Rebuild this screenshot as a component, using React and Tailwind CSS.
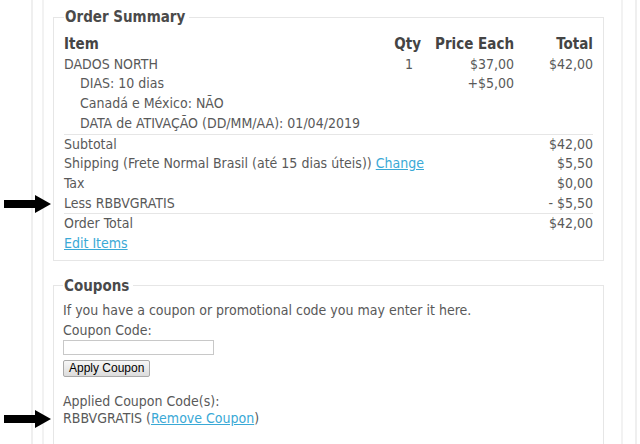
import React from "react";

const FONT = { fontFamily: '"DejaVu Sans Condensed", "DejaVu Sans", sans-serif' };

const Arrow = () => (
  <svg width="47" height="18" viewBox="0 0 47 18" className="block">
    <path d="M0 5 H31 V0 L47 9 L31 18 V13 H0 Z" fill="#000" />
  </svg>
);

const items = [
  { label: "DADOS NORTH", qty: "1", price: "$37,00", total: "$42,00" },
  { label: "DIAS: 10 dias", sub: true, price: "+$5,00" },
  { label: "Canadá e México: NÃO", sub: true },
  { label: "DATA de ATIVAÇÃO (DD/MM/AA): 01/04/2019", sub: true },
];

const Link = ({ children }) => (
  <a href="#" className="text-[#3aa9d6] underline">
    {children}
  </a>
);

const App = () => {
  return (
    <div className="relative h-[444px] w-[640px] overflow-hidden bg-white text-[14px] text-[#595959]" style={FONT}>
      <div className="ml-[31px] h-full w-[606px] border-x-2 border-[#efefef]">
        <div className="ml-[9px] mr-[12px] h-full border-x-2 border-[#f2f2f2] pt-[8px]">
          <fieldset className="ml-[9px] mr-[17px] border border-[#e6e6e6] px-[10px] pb-[6px]">
            <legend className="px-[1px] pr-1 text-[15px] font-bold leading-[18px] text-[#4a4a4a]">Order Summary</legend>
            <table className="mt-[9px] w-full border-collapse leading-[19.7px]">
              <thead>
                <tr className="text-[15px] font-bold text-[#444]">
                  <th className="text-left">Item</th>
                  <th className="w-[60px] text-right">Qty</th>
                  <th className="w-[93px] text-right">Price Each</th>
                  <th className="w-[79px] text-right">Total</th>
                </tr>
              </thead>
              <tbody>
                {items.map((it, i) => (
                  <tr key={i} className={i === items.length - 1 ? "border-b border-[#e6e6e6]" : ""}>
                    <td className={it.sub ? "pl-[16px]" : ""}>{it.label}</td>
                    <td className="pr-[8px] text-right">{it.qty}</td>
                    <td className="text-right">{it.price}</td>
                    <td className="text-right">{it.total}</td>
                  </tr>
                ))}
                <tr>
                  <td colSpan={3}>Subtotal</td>
                  <td className="text-right">$42,00</td>
                </tr>
                <tr>
                  <td colSpan={3}>
                    Shipping (Frete Normal Brasil (até 15 dias úteis)) <Link>Change</Link>
                  </td>
                  <td className="text-right">$5,50</td>
                </tr>
                <tr>
                  <td colSpan={3}>Tax</td>
                  <td className="text-right">$0,00</td>
                </tr>
                <tr className="border-b border-[#e6e6e6]">
                  <td colSpan={3}>Less RBBVGRATIS</td>
                  <td className="text-right">- $5,50</td>
                </tr>
                <tr>
                  <td colSpan={3}>Order Total</td>
                  <td className="text-right">$42,00</td>
                </tr>
                <tr>
                  <td colSpan={4}>
                    <Link>Edit Items</Link>
                  </td>
                </tr>
              </tbody>
            </table>
          </fieldset>

          <fieldset className="ml-[9px] mr-[17px] mt-[16px] border border-[#e6e6e6] px-[9px] pb-[40px]">
            <legend className="px-[1px] pr-1 text-[15px] font-bold leading-[18px] text-[#4a4a4a]">Coupons</legend>
            <div className="leading-[20px]">
              <p className="mt-[5px]">If you have a coupon or promotional code you may enter it here.</p>
              <p>Coupon Code:</p>
              <input className="block h-[15px] w-[151px] border border-[#c8c8c8] bg-white" />
              <button
                className="mt-[5px] block h-[17px] rounded-[2px] border border-[#a9a9a9] bg-gradient-to-b from-[#f7f7f7] to-[#dcdcdc] px-[5px] text-[12px] leading-[15px] text-black"
                style={{ fontFamily: '"Liberation Sans", Arial, sans-serif' }}
              >
                Apply Coupon
              </button>
              <p className="mt-[16px] leading-[17px]">Applied Coupon Code(s):</p>
              <p className="leading-[17px]">
                RBBVGRATIS (<Link>Remove Coupon</Link>)
              </p>
            </div>
          </fieldset>
        </div>
      </div>
      <div className="absolute left-[4px] top-[195px]">
        <Arrow />
      </div>
      <div className="absolute left-[4px] top-[410px]">
        <Arrow />
      </div>
    </div>
  );
};

export default App;
